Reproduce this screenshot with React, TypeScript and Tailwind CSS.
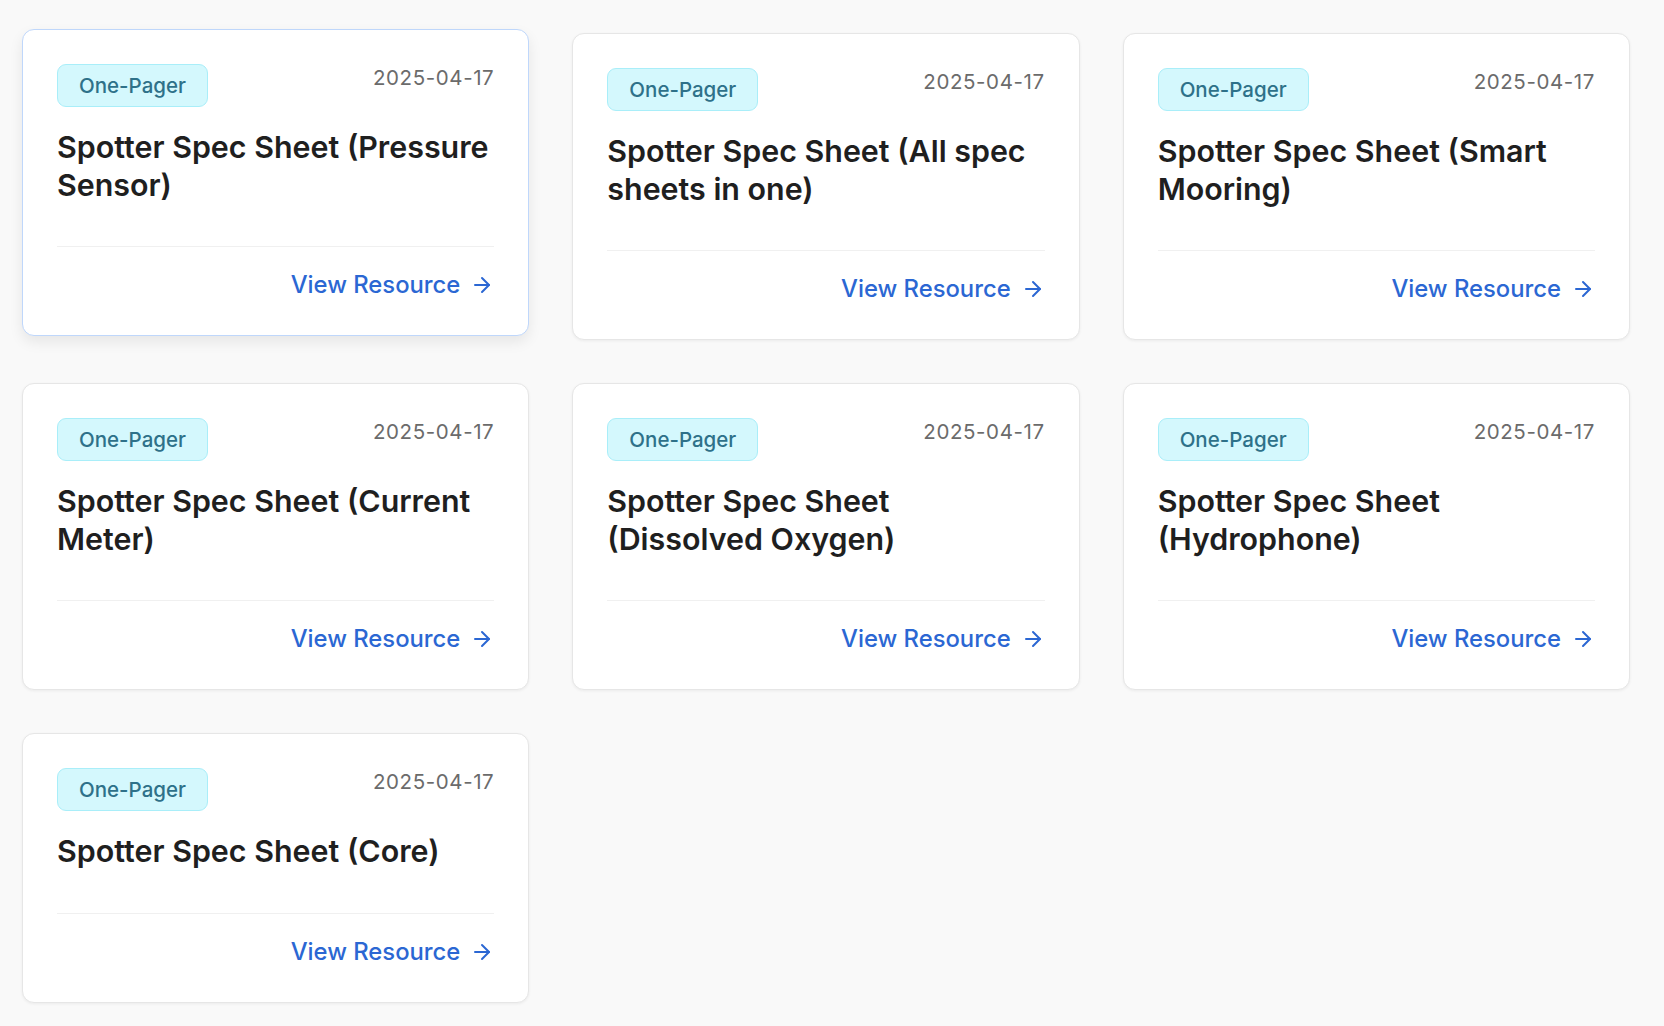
import { ArrowRight } from 'lucide-react';

type Resource = {
  title: string;
  type: string;
  date: string;
};

const resources: Resource[] = [
  { title: 'Spotter Spec Sheet (Pressure Sensor)', type: 'One-Pager', date: '2025-04-17' },
  { title: 'Spotter Spec Sheet (All spec sheets in one)', type: 'One-Pager', date: '2025-04-17' },
  { title: 'Spotter Spec Sheet (Smart Mooring)', type: 'One-Pager', date: '2025-04-17' },
  { title: 'Spotter Spec Sheet (Current Meter)', type: 'One-Pager', date: '2025-04-17' },
  { title: 'Spotter Spec Sheet (Dissolved Oxygen)', type: 'One-Pager', date: '2025-04-17' },
  { title: 'Spotter Spec Sheet (Hydrophone)', type: 'One-Pager', date: '2025-04-17' },
  { title: 'Spotter Spec Sheet (Core)', type: 'One-Pager', date: '2025-04-17' },
];

function ResourceCard({ resource, hovered }: { resource: Resource; hovered?: boolean }) {
  return (
    <div
      className={`flex flex-col rounded-[12px] border bg-white p-[34px] transition ${
        hovered
          ? '-translate-y-[4px] border-[#bfd7fb] shadow-[0_6px_14px_rgba(0,0,0,0.08)]'
          : 'border-[#e6e6e6] shadow-[0_1px_3px_rgba(0,0,0,0.06)]'
      }`}
    >
      <div className="flex items-start justify-between">
        <span className="rounded-[9px] border border-[#a9eef9] bg-[#d4f8fd] px-[21px] py-[8px] text-[20.5px] leading-[25px] font-medium text-[#2e7189]">
          {resource.type}
        </span>
        <span className="pt-[1px] text-[20.5px] leading-[26px] tracking-[0.6px] text-[#6b6b6b]">
          {resource.date}
        </span>
      </div>
      <h3 className="mt-[22px] mb-[42px] text-[30.4px] leading-[37.5px] font-semibold text-[#1f1f1f]">
        {resource.title}
      </h3>
      <div className="mt-auto flex justify-end border-t border-[#f0f0f0] pt-[22px]">
        <a
          href="#"
          className="flex items-center gap-[10px] text-[23.8px] leading-[32px] font-medium text-[#2b67d3]"
        >
          View Resource
          <ArrowRight className="h-[24px] w-[24px]" strokeWidth={2} />
        </a>
      </div>
    </div>
  );
}

export default function App() {
  return (
    <div
      className="min-h-screen bg-[#f9f9f9] pt-[33px] pr-[34px] pb-[24px] pl-[22px]"
      style={{ fontFamily: 'Inter, "Noto Sans", sans-serif' }}
    >
      <div className="grid grid-cols-3 gap-x-[43px] gap-y-[43px]">
        {resources.map((r, i) => (
          <ResourceCard key={r.title} resource={r} hovered={i === 0} />
        ))}
      </div>
    </div>
  );
}
